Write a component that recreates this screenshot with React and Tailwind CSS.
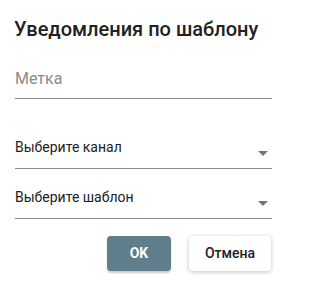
import React from "react";

function Arrow() {
  return (
    <svg width="10" height="5" viewBox="0 0 10 5" className="block">
      <path d="M0 0 L10 0 L5 5 Z" fill="#757575" />
    </svg>
  );
}

function Select({ label }) {
  return (
    <div className="flex items-end justify-between border-b border-[#8c8c8c] h-[31px] pr-[4px] pb-[11px]">
      <span className="text-[14px] leading-[20px] text-[#212121]">{label}</span>
      <span className="pb-[1px]"><Arrow /></span>
    </div>
  );
}

export default function App() {
  return (
    <div
      className="w-[286px] h-[286px] bg-white pl-[15px] pr-[14px] pt-[17px]"
      style={{ fontFamily: "Roboto, 'Noto Sans', sans-serif" }}
    >
      <div className="text-[20px] leading-[24px] font-medium text-[#212121] -ml-[1px]">
        Уведомления по шаблону
      </div>
      <div className="mt-[26px] h-[32px] border-b border-[#8c8c8c]">
        <span className="text-[16px] leading-[24px] text-[#8a8a8a]">Метка</span>
      </div>
      <div className="mt-[39px]">
        <Select label="Выберите канал" />
      </div>
      <div className="mt-[19px]">
        <Select label="Выберите шаблон" />
      </div>
      <div className="mt-[17px] flex justify-end gap-[18px] pr-[1px]">
        <button className="h-[35px] w-[64px] rounded-[4px] bg-[#607d8b] text-white text-[14px] font-bold shadow-[0_2px_2px_rgba(0,0,0,0.2)]">
          OK
        </button>
        <button className="h-[35px] w-[82px] rounded-[4px] bg-white text-[#212121] text-[14px] font-medium shadow-[0_1px_4px_rgba(0,0,0,0.25)]">
          Отмена
        </button>
      </div>
    </div>
  );
}
